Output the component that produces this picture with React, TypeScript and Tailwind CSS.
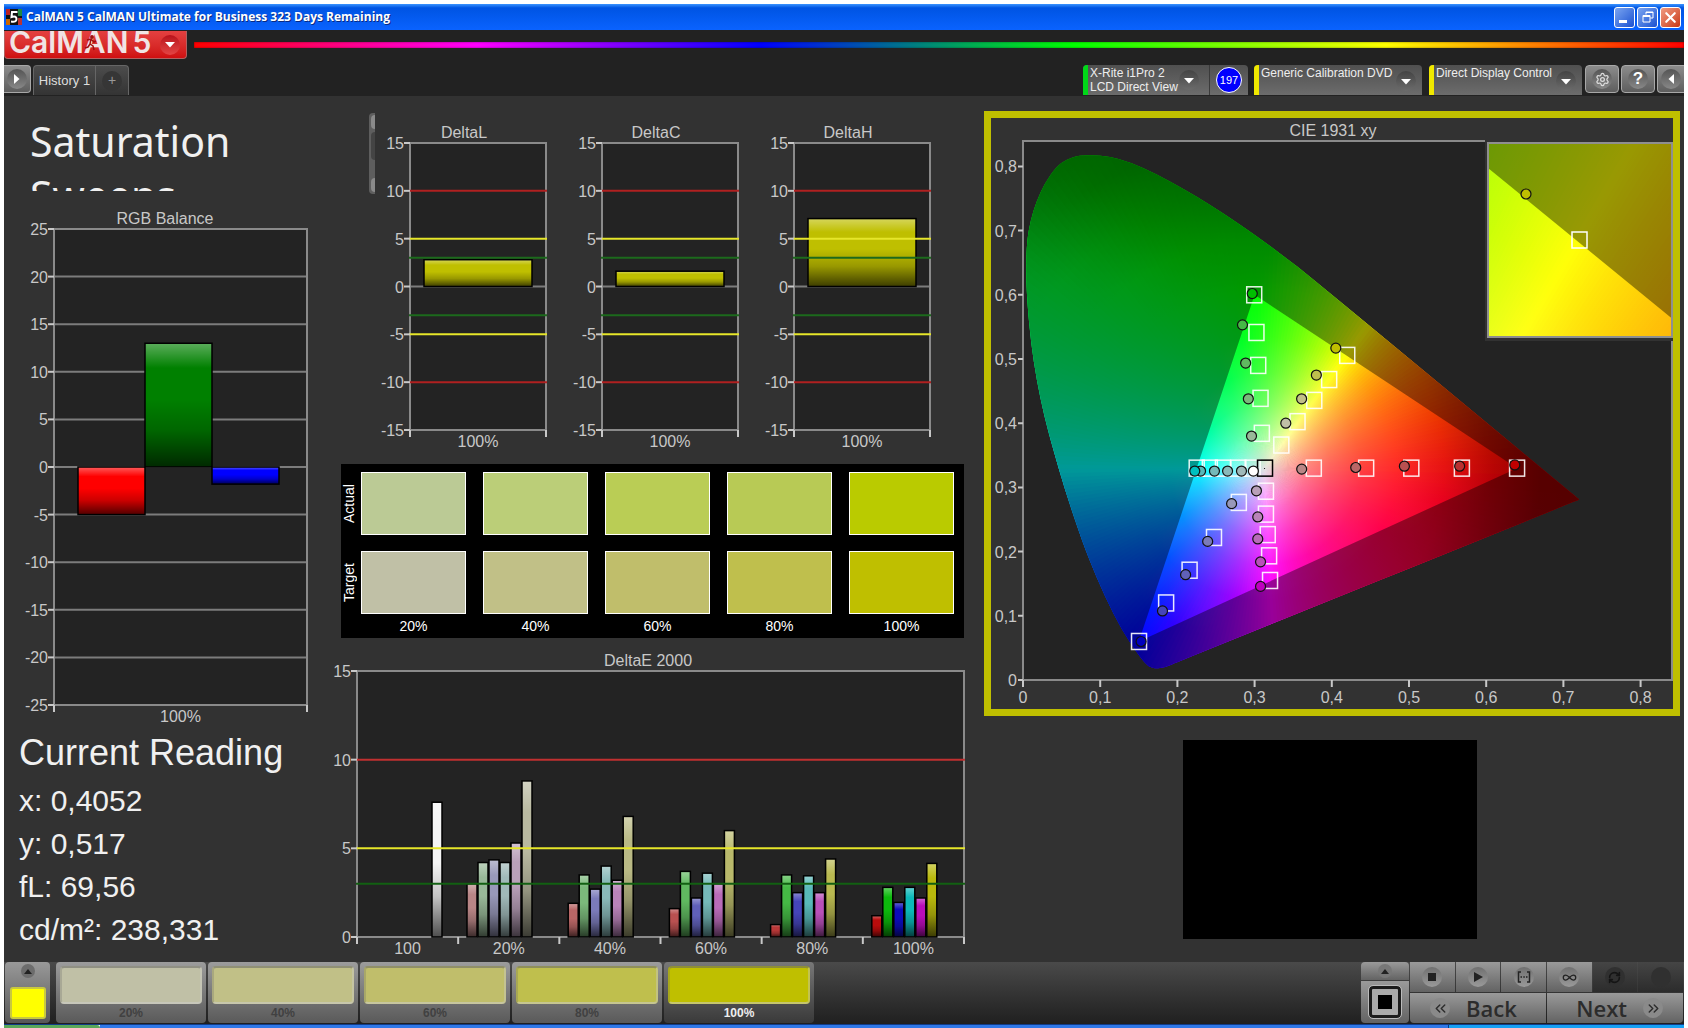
import type { ReactNode } from "react";
import { ChevronsLeft, ChevronsRight, Infinity as InfinityIcon, RefreshCw, Settings, X } from "lucide-react";

type Point = [number, number];
type Bar = { x: number; w: number; value: number; color: string };
type Limit = { value: number; color: string };

const LEVELS = ["20%", "40%", "60%", "80%", "100%"];

const ACTUAL = ["bg-[#bbca95]", "bg-[#bbce78]", "bg-[#bacd55]", "bg-[#b8ca55]", "bg-[#bacb00]"];
const TARGET = ["bg-[#c0c0a6]", "bg-[#c1c087]", "bg-[#c0be6b]", "bg-[#bfbf4d]", "bg-[#bfbf00]"];

const DELTA_LIMITS: Limit[] = [
  { value: 10, color: "#b02020" },
  { value: 5, color: "#e6e62a" },
  { value: 3, color: "#1c6a1c" },
  { value: -3, color: "#1c6a1c" },
  { value: -5, color: "#e6e62a" },
  { value: -10, color: "#b02020" },
];

const DELTA_E = [
  { values: [3, 4.2, 4.35, 4.2, 5.3, 8.8], colors: ["#b98686", "#98b898", "#9898b9", "#a0b9b9", "#b9a0b9", "#b9b9a0"] },
  { values: [1.9, 3.5, 2.7, 4, 3.2, 6.8], colors: ["#b96666", "#7bb97b", "#7b7bb9", "#8ab9b9", "#b983b9", "#b9b984"] },
  { values: [1.6, 3.7, 2.2, 3.6, 3, 6], colors: ["#b95050", "#60b960", "#6060b9", "#75b9b9", "#b96bb9", "#b9b96b"] },
  { values: [0.7, 3.5, 2.5, 3.45, 2.5, 4.4], colors: ["#b93838", "#45b945", "#4545b9", "#58b9b9", "#b950b9", "#b9b950"] },
  { values: [1.2, 2.8, 1.95, 2.8, 2.2, 4.15], colors: ["#b90c0c", "#0cb90c", "#0c0cb9", "#0cb9b9", "#b90cb9", "#b9b90c"] },
];

/* ---------- bar charts ---------- */

type BarChartProps = {
  id: string;
  title: string;
  titleX: number;
  size: Point;
  plot: [number, number, number, number];
  range: Point;
  grid: number[];
  labels: string[];
  bars: Bar[];
  limits?: Limit[];
};

function BarChart({ id, title, titleX, size, plot, range, grid, labels, bars, limits = [] }: BarChartProps) {
  const [x, y, w, h] = plot;
  const [min, max] = range;
  const toY = (v: number) => y + ((max - v) / (max - min)) * h;
  const ticks: number[] = [];
  for (let v = min; v <= max; v += 5) ticks.push(v);

  return (
    <svg
      viewBox={`0 0 ${size[0]} ${size[1]}`}
      className="block h-auto w-full text-[16px]"
      fill="#c8c8c8"
      role="img"
      aria-label={title}
    >
      <defs>
        <linearGradient id={`${id}-gloss`} x1="0" y1="0" x2="0" y2="1">
          <stop offset="0" stopColor="#fff" stopOpacity="0.36" />
          <stop offset="0.2" stopColor="#fff" stopOpacity="0" />
          <stop offset="0.45" stopColor="#000" stopOpacity="0" />
          <stop offset="0.7" stopColor="#000" stopOpacity="0.2" />
          <stop offset="1" stopColor="#000" stopOpacity="0.68" />
        </linearGradient>
      </defs>
      <text x={titleX} y={y - 5} textAnchor="middle">{title}</text>
      <rect x={x} y={y} width={w} height={h} fill="#232323" />
      {grid.map((v) => (
        <path key={v} d={`M${x} ${toY(v)}h${w}`} stroke="#7c7c7c" strokeWidth="2" />
      ))}
      <rect x={x} y={y} width={w} height={h} fill="none" stroke="#8a8a8a" strokeWidth="2" />
      {bars.map((b, i) => {
        const top = toY(Math.max(b.value, 0));
        const height = (Math.abs(b.value) / (max - min)) * h;
        return (
          <g key={i}>
            <rect x={b.x} y={top} width={b.w} height={height} fill={b.color} />
            <rect
              x={b.x}
              y={top}
              width={b.w}
              height={height}
              fill={`url(#${id}-gloss)`}
              stroke="#000"
              strokeWidth="1.5"
            />
          </g>
        );
      })}
      {limits.map((l) => (
        <path key={l.value} d={`M${x - 1} ${toY(l.value)}h${w + 2}`} stroke={l.color} strokeWidth="2" />
      ))}
      {ticks.map((v) => (
        <g key={v}>
          <path d={`M${x - 6} ${toY(v)}h6`} stroke="#c8c8c8" strokeWidth="2" />
          <text x={x - 6} y={toY(v) + 6} textAnchor="end">{v}</text>
        </g>
      ))}
      {labels.map((label, i) => (
        <text key={label} x={x + ((i + 0.5) * w) / labels.length} y={y + h + 17} textAnchor="middle">
          {label}
        </text>
      ))}
      {Array.from({ length: labels.length + 1 }, (_, i) => (
        <path key={i} d={`M${x + (i * w) / labels.length} ${y + h}v7`} stroke="#c8c8c8" strokeWidth="2" />
      ))}
    </svg>
  );
}

function DeltaChart({ name, value }: { name: string; value: number }) {
  return (
    <BarChart
      id={name}
      title={name}
      titleX={89}
      size={[192, 342]}
      plot={[35, 30, 136, 287]}
      range={[-15, 15]}
      grid={[0]}
      labels={["100%"]}
      limits={DELTA_LIMITS}
      bars={[{ x: 49, w: 108, value, color: "#bfbf00" }]}
    />
  );
}

/* ---------- CIE diagram ---------- */

const WHITE: Point = [0.3127, 0.329];
const GAMUT: Point[] = [[0.3, 0.6], [0.64, 0.33], [0.15, 0.06]];

// the red corner is listed twice so that it stays sharp when smoothed
const LOCUS: Point[] = [
  [0.1725, 0.018], [0.166, 0.0195], [0.161, 0.0225], [0.151, 0.0364], [0.1278, 0.0779], [0.1062, 0.1298],
  [0.0846, 0.1906], [0.0717, 0.2336], [0.0544, 0.296], [0.0393, 0.3583], [0.0276, 0.4102], [0.0177, 0.4673],
  [0.0104, 0.5244], [0.0056, 0.5867], [0.0037, 0.6386], [0.0052, 0.6854], [0.01, 0.7165], [0.0173, 0.745],
  [0.0281, 0.7736], [0.0432, 0.7996], [0.0566, 0.811], [0.0717, 0.817], [0.0997, 0.8175], [0.1256, 0.812],
  [0.1559, 0.798], [0.1904, 0.7765], [0.225, 0.753], [0.2595, 0.727], [0.3027, 0.6916], [0.3372, 0.6604],
  [0.3696, 0.6308], [0.7206, 0.281], [0.7206, 0.281], [0.2, 0.028], [0.186, 0.0205],
];

const TARGETS: Point[] = [
  [0.3767, 0.33], [0.4445, 0.33], [0.503, 0.33], [0.5685, 0.33], [0.64, 0.33],
  [0.2995, 0.6], [0.3024, 0.5413], [0.3047, 0.49], [0.3077, 0.4387], [0.3094, 0.3842],
  [0.42, 0.5056], [0.3966, 0.468], [0.3773, 0.4355], [0.3556, 0.4024], [0.3346, 0.366],
  [0.225, 0.33], [0.242, 0.33], [0.259, 0.33], [0.279, 0.33], [0.2975, 0.33],
  [0.1503, 0.06], [0.1854, 0.12], [0.2158, 0.171], [0.2474, 0.222], [0.2796, 0.2766],
  [0.32, 0.155], [0.3188, 0.1934], [0.317, 0.2265], [0.3147, 0.2584], [0.3147, 0.2941],
];

const READINGS: [number, number, string][] = [
  [0.361, 0.3285, "#b98686"], [0.431, 0.331, "#b96666"], [0.494, 0.333, "#b95050"], [0.5656, 0.333, "#b93030"], [0.637, 0.335, "#bf0000"],
  [0.296, 0.38, "#98b898"], [0.2919, 0.438, "#7bb97b"], [0.2884, 0.4937, "#60b960"], [0.2843, 0.5532, "#45b945"], [0.297, 0.602, "#00bf00"],
  [0.3404, 0.4, "#c0c0a6"], [0.3609, 0.438, "#c1c087"], [0.38, 0.475, "#bfbf4d"], [0.4052, 0.517, "#bfbf00"],
  [0.283, 0.3255, "#a0b9b9"], [0.265, 0.3255, "#8ab9b9"], [0.248, 0.3255, "#75b9b9"], [0.23, 0.3255, "#58b9b9"], [0.2225, 0.3255, "#00bfbf"],
  [0.2984, 0.3255, "#ffffff"],
  [0.2702, 0.2747, "#9898b9"], [0.2392, 0.2159, "#7b7bb9"], [0.2106, 0.164, "#6060b9"], [0.1807, 0.1076, "#4545b9"], [0.153, 0.06, "#0000bf"],
  [0.3024, 0.2947, "#b9a0b9"], [0.3041, 0.254, "#b983b9"], [0.3041, 0.2197, "#b96bb9"], [0.3077, 0.184, "#b950b9"], [0.3077, 0.1458, "#bf00bf"],
];

const px = (x: number) => 32 + x * 772;
const py = (y: number) => 562 - y * 642;
const outline = (points: Point[]) => "M" + points.map(([x, y]) => `${px(x)} ${py(y)}`).join("L") + "Z";

// closed curve through the midpoints, with the points themselves as handles
function curve(points: Point[]) {
  const mid = (i: number) => {
    const a = points[i % points.length];
    const b = points[(i + 1) % points.length];
    return `${px((a[0] + b[0]) / 2)} ${py((a[1] + b[1]) / 2)}`;
  };
  return `M${mid(points.length - 1)}` + points.map(([x, y], i) => `Q${px(x)} ${py(y)} ${mid(i)}`).join("") + "Z";
}

const smooth = (v: number) => {
  const t = Math.min(1, Math.max(0, v));
  return t * t * (3 - 2 * t);
};

// linear sRGB of a chromaticity, scaled so the strongest channel is full
function colorAt(x: number, y0: number) {
  const y = Math.max(y0, 0.004);
  const X = x / y;
  const Z = (1 - x - y) / y;
  const rgb = [
    3.2406 * X - 1.5372 - 0.4986 * Z,
    -0.9689 * X + 1.8758 + 0.0415 * Z,
    0.0557 * X - 0.204 + 1.057 * Z,
  ];
  const peak = Math.max(...rgb);
  const dim = 1 - 0.45 * smooth((x - 0.48) / 0.22) - 0.36 * smooth((y - 0.6) / 0.24);
  return `rgb(${rgb.map((c) => Math.round((Math.max(c, 0) / peak) * 255 * dim)).join(",")})`;
}

const STOPS = [0, 0.02, 0.04, 0.07, 0.11, 0.16, 0.22, 0.3, 0.38, 0.46, 0.55, 0.65, 0.78, 1];
const REACH = 600;

function HueFan({ id, from, to, count }: { id: string; from: number; to: number; count: number }) {
  const cx = px(WHITE[0]);
  const cy = py(WHITE[1]);
  const step = ((to - from) / count) * (Math.PI / 180);
  return (
    <g>
      {Array.from({ length: count }, (_, i) => {
        const a = (from * Math.PI) / 180 + i * step;
        const mid = a + step / 2;
        const at = (angle: number, r: number) => [cx + Math.cos(angle) * r, cy + Math.sin(angle) * r];
        const [ex, ey] = at(mid, REACH);
        const [ax, ay] = at(a, REACH);
        const [bx, by] = at(a + step * 2, REACH);
        return (
          <g key={i}>
            <linearGradient id={`${id}${i}`} gradientUnits="userSpaceOnUse" x1={cx} y1={cy} x2={ex} y2={ey}>
              {STOPS.map((s) => {
                const [sx, sy] = at(mid, REACH * s);
                return <stop key={s} offset={s} stopColor={colorAt((sx - 32) / 772, (562 - sy) / 642)} />;
              })}
            </linearGradient>
            <path d={`M${cx} ${cy}L${ax} ${ay}L${bx} ${by}Z`} fill={`url(#${id}${i})`} />
          </g>
        );
      })}
    </g>
  );
}

function CieChart() {
  const shade = "M0 0H682V591H0Z" + outline(GAMUT);
  return (
    <svg viewBox="0 0 682 591" className="block h-auto w-full text-[16px]" fill="#c8c8c8" role="img" aria-label="CIE 1931 xy">
      <defs>
        <clipPath id="locus">
          <path d={curve(LOCUS)} />
        </clipPath>
      </defs>
      <text x="342" y="18" textAnchor="middle">CIE 1931 xy</text>
      <rect x="32" y="23" width="649" height="539" fill="#232323" stroke="#8a8a8a" strokeWidth="2" />
      <g clipPath="url(#locus)">
        <HueFan id="hue" from={0} to={360} count={300} />
        <path d={shade} fillRule="evenodd" opacity="0.4" fill="#000" />
      </g>

      {Array.from({ length: 9 }, (_, i) => {
        const label = i === 0 ? "0" : `0,${i}`;
        return (
          <g key={i}>
            <path d={`M${px(i / 10)} 562v7M27 ${py(i / 10)}h5`} stroke="#c8c8c8" strokeWidth="2" />
            <text x={px(i / 10)} y="585" textAnchor="middle">{label}</text>
            <text x="26" y={py(i / 10) + 6} textAnchor="end">{label}</text>
          </g>
        );
      })}

      {TARGETS.map(([x, y], i) => (
        <rect key={i} x={px(x) - 7.5} y={py(y) - 8} width="15" height="16" fill="none" stroke="#fff" strokeOpacity="0.9" strokeWidth="1.5" />
      ))}
      <rect x={px(0.3135) - 7.5} y={py(0.33) - 8} width="15" height="16" fill="none" stroke="#000" strokeWidth="1.5" />
      {READINGS.map(([x, y, color], i) => (
        <circle key={i} cx={px(x)} cy={py(y)} r="5" fill={color} stroke="#111" strokeWidth="1.2" />
      ))}

      <path d="M494 21h188v202h-188z" fill="#323232" />
      <svg x="497" y="25" width="184" height="194" viewBox={`${px(0.42) - 18.4} ${py(0.5056) - 15.6} 36.8 31.3`} preserveAspectRatio="none">
        <HueFan id="zoom" from={-72} to={-36} count={120} />
        <path d={shade} fillRule="evenodd" opacity="0.4" fill="#000" />
      </svg>
      <rect x="497" y="25" width="184" height="194" fill="none" stroke="#8f8f8f" strokeWidth="2" />
      <rect x="581" y="114" width="15" height="16" fill="none" stroke="#fff" strokeWidth="1.5" />
      <circle cx="535" cy="76" r="5" fill="#bfbf00" stroke="#111" strokeWidth="1.2" />
    </svg>
  );
}

/* ---------- chrome ---------- */

function Caret({ className = "" }: { className?: string }) {
  return (
    <span className={`flex size-5 items-center justify-center rounded-full bg-linear-to-b from-[#444] to-[#6c6c6c] ${className}`}>
      <svg viewBox="0 0 10 6" className="mt-0.5 w-2.5" fill="#fff"><path d="M0 0h10L5 5.5z" /></svg>
    </span>
  );
}

function TitleBar() {
  const button = "flex h-[21px] w-[21px] items-center justify-center rounded-[3px] border border-white";
  return (
    <header className="flex h-[26px] items-center bg-linear-to-b from-[#3a93ff] via-[#0054e3] via-15% to-[#0a63ff] pr-[3px] pl-0.5">
      <svg viewBox="0 0 16 16" className="mr-1 size-4">
        <path d="M0 0h16v16H0z" fill="#111" />
        <path d="M0 0h4v6H0z" fill="#b22" />
        <path d="M12 0h4v7h-4z" fill="#284" />
        <path d="M0 10h4v6H0z" fill="#c60" />
        <path d="M12 9h4v7h-4z" fill="#b33" />
        <path d="M11.500 3H6L5.500 8Q10.500 6.500 10.500 10T5 12.500" fill="none" stroke="#fff" strokeWidth="2" />
      </svg>
      <h1 className="flex-1 font-['Open_Sans',sans-serif] text-[12px] font-bold text-white [text-shadow:1px_1px_#0a2a80]">
        CalMAN 5 CalMAN Ultimate for Business 323 Days Remaining
      </h1>
      <div className="flex gap-0.5">
        <button aria-label="Minimize" className={`${button} bg-linear-to-br from-[#7ba4f0] to-[#1c4fd0]`}>
          <span className="mt-2 mr-1 h-[3px] w-2 bg-white" />
        </button>
        <button aria-label="Restore" className={`${button} bg-linear-to-br from-[#7ba4f0] to-[#1c4fd0]`}>
          <svg viewBox="0 0 12 12" className="size-3" fill="none" stroke="#fff">
            <path d="M4 3.500V1h7v6H8.500M4 1.500h7M1 4.500h7v6.500H1zM1 5.500h7" />
          </svg>
        </button>
        <button aria-label="Close" className={`${button} bg-linear-to-br from-[#f09a80] to-[#c8340c]`}>
          <X size={17} color="#fff" strokeWidth={3} />
        </button>
      </div>
    </header>
  );
}

function Logo() {
  return (
    <button
      aria-label="CalMAN 5 menu"
      className="relative flex h-[28px] w-[183px] shrink-0 items-end overflow-hidden rounded-b-sm border border-t-0 border-[#b06060] bg-linear-to-b from-[#e44040] to-[#cf0e10] pl-1 font-[Inter,sans-serif] text-[30px] leading-[32px] font-semibold text-[#f0e4e4]"
    >
      <span className="mr-1">CalMAN</span>
      <span>5</span>
      <svg viewBox="0 0 14 16" className="absolute top-1 left-[79px] w-3.5" fill="none" stroke="#a01010" strokeWidth="1.500">
        <circle cx="8" cy="2" r="1.200" fill="#a01010" />
        <path d="M3 5l4-1 3 3 2-1M7 4L6 9l3 2 1 4M6 9l-2 3-3 1" />
      </svg>
      <span className="absolute top-1 right-1.5 flex size-5 items-center justify-center rounded-full bg-linear-to-b from-[#b8101a] to-[#e44444]">
        <svg viewBox="0 0 10 6" className="w-2.5" fill="#fff"><path d="M0 0h10L5 5.5z" /></svg>
      </span>
    </button>
  );
}

function RoundButton({ label, className, children }: { label: string; className: string; children: ReactNode }) {
  return (
    <button
      aria-label={label}
      className={`flex h-7 items-center justify-center border border-[#a8a8a8] bg-linear-to-b from-[#8c8c8c] to-[#5e5e5e] ${className}`}
    >
      <span className="flex size-5 items-center justify-center rounded-full bg-linear-to-b from-[#555] to-[#888] text-white">
        {children}
      </span>
    </button>
  );
}

function SourceSelect({ label, value, className }: { label: string; value: string; className: string }) {
  return (
    <div className={`relative flex h-[30px] rounded-t bg-linear-to-b from-[#505050] to-[#6c6c6c] ${className}`}>
      <span className="w-[5px] rounded-tl bg-[#f0e800]" />
      <select
        aria-label={label}
        className="h-4 flex-1 appearance-none bg-transparent pl-0.5 text-[12px] leading-4 text-[#eee] outline-none"
        defaultValue={value}
      >
        <option>{value}</option>
      </select>
      <Caret className="pointer-events-none absolute right-1.5 bottom-1" />
    </div>
  );
}

function Toolbar() {
  return (
    <div className="bg-[#222]">
      <div className="flex h-[35px] items-start pt-px">
        <Logo />
        <div className="mt-[11px] ml-[7px] h-1.5 flex-1 bg-[linear-gradient(90deg,#f00,#f0f_19%,#00f_38%,#0f0_59%,#ff0_80%,#f00)] shadow-[inset_0_0_2px_#0008]" />
      </div>
      <div className="flex h-[31px] items-start">
        <RoundButton label="Expand" className="w-[27px] rounded-r border-l-0">
          <svg viewBox="0 0 6 10" className="h-2.5" fill="#fff"><path d="M0 0v10l5.500-5z" /></svg>
        </RoundButton>
        <nav className="ml-0.5 flex h-[30px] rounded-t border border-b-0 border-[#666] bg-linear-to-b from-[#4c4c4c] to-[#343434]">
          <button className="w-[62px] border-r border-[#666] text-[13px] text-[#ddd]">History 1</button>
          <button aria-label="Add history" className="flex w-8 items-center justify-center">
            <span className="flex size-5 items-center justify-center rounded-full bg-[#363636] text-[14px] text-[#999]">+</span>
          </button>
        </nav>
        <div className="ml-auto flex items-start">
          <div className="mr-1.5 flex h-[30px] w-[165px] rounded-t bg-linear-to-b from-[#505050] to-[#6c6c6c]">
            <span className="w-[5px] rounded-tl bg-[#00d818]" />
            <button className="flex flex-1 items-center justify-between border-r border-[#3a3a3a] pr-2.5 pl-0.5 text-left text-[12px] leading-[14px] text-[#eee]">
              <span className="whitespace-nowrap">X-Rite i1Pro 2<br />LCD Direct View</span>
              <Caret />
            </button>
            <span className="mx-1.5 mt-0.5 flex size-[26px] items-center justify-center rounded-full border border-white bg-[#0000ff] text-[11px] text-white">
              197
            </span>
          </div>
          <SourceSelect label="Source" value="Generic Calibration DVD" className="mr-[7px] w-[168px]" />
          <SourceSelect label="Display" value="Direct Display Control" className="mr-[3px] w-[153px]" />
          <RoundButton label="Settings" className="mr-0.5 w-[34px] rounded"><Settings size={15} color="#ddd" /></RoundButton>
          <RoundButton label="Help" className="mr-0.5 w-[34px] rounded">
            <span className="text-[17px] font-bold">?</span>
          </RoundButton>
          <RoundButton label="Collapse" className="w-[27px] rounded-l border-r-0">
            <svg viewBox="0 0 6 10" className="h-2.5" fill="#fff"><path d="M6 0v10L.5 5z" /></svg>
          </RoundButton>
        </div>
      </div>
    </div>
  );
}

/* ---------- panels ---------- */

function Swatches() {
  const rows = [
    { name: "Actual", colors: ACTUAL },
    { name: "Target", colors: TARGET },
  ];
  return (
    <div className="mr-5 ml-[11px] bg-black pt-2 pr-2.5 pb-1 text-[14px] leading-4 text-white">
      {rows.map((row) => (
        <div key={row.name} className="mb-4 flex h-[63px]">
          <span className="w-5 rotate-180 pl-1 text-center leading-4 [writing-mode:vertical-rl]">{row.name}</span>
          <div className="grid flex-1 grid-cols-5 gap-x-[17px]">
            {row.colors.map((color) => (
              <div key={color} className={`border border-white ${color}`} />
            ))}
          </div>
        </div>
      ))}
      <div className="-mt-3 ml-5 grid grid-cols-5 gap-x-[17px] text-center">
        {LEVELS.map((level) => (
          <span key={level}>{level}</span>
        ))}
      </div>
    </div>
  );
}

function LeftColumn() {
  return (
    <section>
      <h2 className="mt-[18px] ml-[26px] h-[77px] w-60 overflow-hidden font-['Noto_Sans',sans-serif] text-[41px] leading-[54px] text-[#f0f0f0]">
        Saturation Sweeps
      </h2>
      <BarChart
        id="rgb"
        title="RGB Balance"
        titleX={161}
        size={[326, 540]}
        plot={[50, 38, 253, 476]}
        range={[-25, 25]}
        grid={[-20, -15, -10, -5, 0, 5, 10, 15, 20]}
        labels={["100%"]}
        bars={[
          { x: 74, w: 67, value: -5, color: "#ff0000" },
          { x: 141, w: 67, value: 13, color: "#008000" },
          { x: 208, w: 67, value: -1.8, color: "#0000ff" },
        ]}
      />
      <div className="ml-[15px] text-[#f0f0f0]">
        <h2 className="text-[36px] leading-[44px]">Current Reading</h2>
        <div className="mt-1 text-[30px] leading-[43px]">
          <p>x: 0,4052</p>
          <p>y: 0,517</p>
          <p>fL: 69,56</p>
          <p>cd/m²: 238,331</p>
        </div>
      </div>
    </section>
  );
}

function MiddleColumn() {
  const bars: Bar[] = [{ x: 102, w: 10, value: 7.6, color: "#f4f4f4" }];
  DELTA_E.forEach((group, g) =>
    group.values.forEach((value, i) => {
      bars.push({ x: 137 + g * 101.2 + i * 11, w: 10, value, color: group.colors[i] });
    })
  );
  return (
    <section>
      <div className="mt-[17px] mr-[33px] ml-[39px] flex items-start">
        <div className="flex h-[81px] w-1.5 flex-col justify-between rounded-l bg-[#5e5e5e] py-0.5 pl-0.5">
          <span className="h-3.5 rounded-l bg-[#8a8a8a]" />
          <span className="-mt-4 h-7 rounded-l-lg bg-[#444]" />
          <span className="h-3.5 rounded-l bg-[#8a8a8a]" />
        </div>
        <div className="grid flex-1 grid-cols-3">
          <DeltaChart name="DeltaL" value={2.8} />
          <DeltaChart name="DeltaC" value={1.6} />
          <DeltaChart name="DeltaH" value={7.1} />
        </div>
      </div>
      <div className="mt-[9px]">
        <Swatches />
      </div>
      <BarChart
        id="deltae"
        title="DeltaE 2000"
        titleX={318}
        size={[654, 322]}
        plot={[27, 33, 607, 266]}
        range={[0, 15]}
        grid={[]}
        labels={["100", ...LEVELS]}
        limits={[
          { value: 10, color: "#c03030" },
          { value: 5, color: "#e6e62a" },
          { value: 3, color: "#126012" },
        ]}
        bars={bars}
      />
    </section>
  );
}

function Transport() {
  const light = "bg-linear-to-b from-[#9a9a9a] to-[#636363]";
  const dark = "bg-linear-to-b from-[#454545] to-[#2c2c2c]";
  const items: { label: string; tone: string; icon: ReactNode }[] = [
    { label: "Stop", tone: light, icon: <span className="size-2 bg-[#222]" /> },
    { label: "Play", tone: light, icon: <svg viewBox="0 0 9 10" className="ml-0.5 h-2.5" fill="#222"><path d="M0 0v10l9-5z" /></svg> },
    {
      label: "Read series",
      tone: light,
      icon: (
        <svg viewBox="0 0 14 12" className="h-3" fill="none" stroke="#222" strokeWidth="1.500">
          <path d="M4 1H1.500v10H4M10 1h2.500v10H10M3.500 6h1.500M6.300 6h1.500M9 6h1.500" />
        </svg>
      ),
    },
    { label: "Read continuously", tone: light, icon: <InfinityIcon size={15} color="#222" /> },
    { label: "Repeat", tone: dark, icon: <RefreshCw size={13} color="#151515" strokeWidth={3} /> },
    { label: "Record", tone: dark, icon: null },
  ];
  const step = `flex h-[30px] items-center text-[#2c2c2c] font-['Open_Sans',sans-serif] text-[22px] font-semibold ${light}`;
  return (
    <div className="ml-auto flex gap-px">
      <div className="flex w-12 flex-col gap-px">
        <button aria-label="Show window" className={`flex h-[18px] items-center justify-center rounded-t ${light}`}>
          <span className="flex size-3.5 items-center justify-center rounded-full bg-[#777]">
            <svg viewBox="0 0 8 5" className="w-2" fill="#222"><path d="M0 5h8L4 0z" /></svg>
          </span>
        </button>
        <button aria-label="Pattern window" className={`flex h-[42px] items-center justify-center rounded-b ${light}`}>
          <span className="flex size-8 items-center justify-center rounded border-[3px] border-[#1c1c1c] bg-[#aaa] outline outline-[#bbb]">
            <span className="size-3.5 bg-black" />
          </span>
        </button>
      </div>
      <div className="w-[273px]">
        <div className="mb-px grid grid-cols-6 gap-px">
          {items.map((item) => (
            <button key={item.label} aria-label={item.label} className={`flex h-[30px] items-center justify-center ${item.tone}`}>
              <span className={`flex size-5 items-center justify-center rounded-full ${item.tone === light ? "bg-linear-to-b from-[#707070] to-[#9a9a9a]" : "bg-[#303030]"}`}>
                {item.icon}
              </span>
            </button>
          ))}
        </div>
        <div className="grid grid-cols-2 gap-px">
          <button className={`${step} gap-4 rounded-bl pl-5`}>
            <span className="flex size-5 items-center justify-center rounded-full bg-[#8a8a8a]"><ChevronsLeft size={17} /></span>
            Back
          </button>
          <button className={`${step} justify-end gap-4 rounded-br pr-5`}>
            Next
            <span className="flex size-5 items-center justify-center rounded-full bg-[#8a8a8a]"><ChevronsRight size={17} /></span>
          </button>
        </div>
      </div>
    </div>
  );
}

function BottomBar() {
  return (
    <footer>
      <div className="flex h-[62px] bg-linear-to-b from-[#4a4a4a] to-[#202020] px-px pb-px">
        <button aria-label="Current color" className="mr-1.5 flex w-[45px] flex-col items-center justify-between rounded bg-linear-to-b from-[#999] to-[#585858] pt-0.5 pb-1">
          <span className="flex size-3.5 items-center justify-center rounded-full bg-[#6c6c6c]">
            <svg viewBox="0 0 8 5" className="w-2" fill="#222"><path d="M0 5h8L4 0z" /></svg>
          </span>
          <span className="h-8 w-9 rounded-[3px] border-2 border-[#c8c840] bg-[#ffff00]" />
        </button>
        <div className="flex gap-0.5">
          {LEVELS.map((level, i) => {
            const active = i === 4;
            return (
              <button
                key={level}
                className={`w-[150px] rounded px-1 pt-1 text-[12px] leading-[19px] font-bold ${
                  active
                    ? "bg-linear-to-b from-[#787878] to-[#3a3a3a] text-[#eee]"
                    : "bg-linear-to-b from-[#9c9c9c] to-[#5a5a5a] text-[#414141]"
                }`}
              >
                <span className={`block h-[38px] rounded border-2 border-t-[#6668] border-r-[#ccc6] border-b-[#ccc8] border-l-[#6664] ${TARGET[i]}`} />
                {level}
              </button>
            );
          })}
        </div>
        <Transport />
      </div>
      <div className="flex h-1 border-t border-[#123c88]">
        <span className="w-24 rounded-tr bg-[#5aa85a]" />
        <span className="flex-1 bg-[#2f78e8]" />
        <span className="w-[236px] border-l border-[#0a3c80] bg-[#16a0f4]" />
      </div>
    </footer>
  );
}

export default function App() {
  return (
    <div className="bg-white px-1 pt-1 font-['Liberation_Sans',Arial,sans-serif]">
      <TitleBar />
      <Toolbar />
      <main className="grid min-h-[866px] grid-cols-[326fr_654fr_700fr] bg-[#323232]">
        <LeftColumn />
        <MiddleColumn />
        <section>
          <div className="mt-[15px] mr-1 border-[7px] border-[#bfbf00]">
            <CieChart />
          </div>
          <div className="flex justify-center pt-6 pr-2">
            <div className="h-[199px] w-[294px] bg-black" />
          </div>
        </section>
      </main>
      <BottomBar />
    </div>
  );
}
